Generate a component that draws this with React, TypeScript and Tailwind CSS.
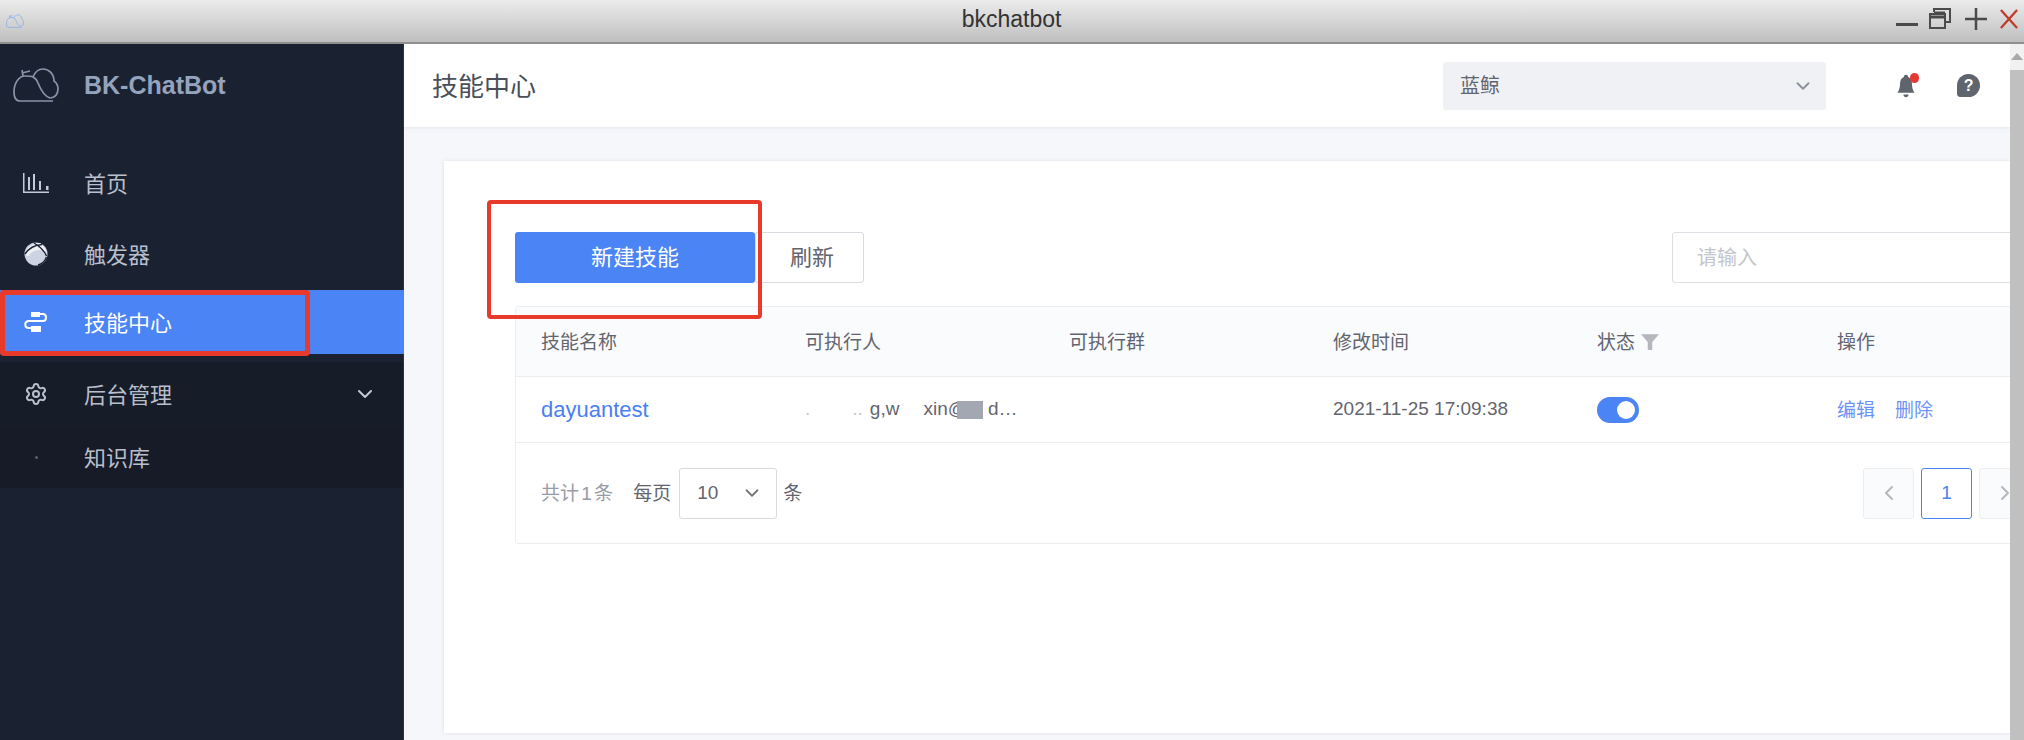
import { ChevronDown, ChevronLeft, ChevronRight, Settings } from "lucide-react";

const FONT = "font-['Liberation_Sans','Noto_Sans_CJK_SC',sans-serif]";

function CloudLogo({ className }: { className: string }) {
  return (
    <svg viewBox="0 0 46 36" fill="none" stroke="currentColor" strokeWidth="1.7" className={className}>
      <path d="M40 33 H7 C2 33 1 28 1 24 C1 15 6 8 12 8 C15 8 18 8 20 9 C22 4 26 1 30 1 C36 1 41 6 41 13 C44 15 45 18 45 21 C45 26 42 30 37 30 C31 28 27 20 25 15 C24 12 22 10 20 9" />
      <path d="M10 8 L9 2 M9 5 L17 3" />
    </svg>
  );
}

function BarsIcon() {
  return (
    <svg viewBox="0 0 26 20" className="w-[26px] h-[20px] text-[#c4cad6]" fill="currentColor">
      <rect x="0" y="0" width="1.5" height="20" />
      <rect x="0" y="18.5" width="26" height="1.5" />
      <rect x="5" y="4" width="2" height="13" />
      <rect x="10" y="1" width="2" height="16" />
      <rect x="16" y="8" width="2" height="9" />
      <rect x="23" y="13" width="2.5" height="4" />
    </svg>
  );
}

function TriggerIcon() {
  return (
    <svg viewBox="0 0 24 24" className="w-[24px] h-[24px]" fill="none">
      <circle cx="12" cy="12" r="11.5" fill="#cdd3e2" />
      <path d="M1 11 C4 4 10 1 16 1 C19 3 21 6 23 10 C18 7 10 7 6 12 C5 15 3 15 1 11 Z" fill="#f0f1f4" />
      <path d="M1 12 C5 6 11 3 18 2.5 M10 1 C15 4 20 8 22.5 14 M22.5 15 C21 19 18 22 14 23" stroke="#1a2232" strokeWidth="1.4" />
    </svg>
  );
}

function SkillIcon() {
  return (
    <svg viewBox="0 0 24 20" className="w-[24px] h-[20px] text-white" fill="none" stroke="currentColor">
      <rect x="7" y="0" width="9" height="5" fill="currentColor" stroke="none" />
      <rect x="7" y="14" width="10" height="6" fill="currentColor" stroke="none" />
      <path strokeWidth="2" d="M16 2 H19 C23 2 23 9 19 9 H5 C0 9 0 16 5 16 H8" />
    </svg>
  );
}

function BellIcon() {
  return (
    <div className="relative w-[20px] h-[24px]">
      <svg viewBox="0 0 22 28" className="w-[20px] h-[24px] text-[#5f646d]" fill="currentColor">
        <path d="M11 1 C13 1 13.5 2.5 13.5 3.5 C17 5 18 8 18 12 C18 16 19 19 21 22 H1 C3 19 4 16 4 12 C4 8 5 5 8.5 3.5 C8.5 2.5 9 1 11 1 Z" />
        <path d="M8 24 H14 C14 26 12.5 27 11 27 C9.5 27 8 26 8 24 Z" />
      </svg>
      <div className="absolute top-[-1px] right-[-3px] w-[9px] h-[10px] rounded-full bg-[#e53935]" />
    </div>
  );
}

function NavRow({ icon, label, active, chevron, className }: { icon: React.ReactNode; label: string; active?: boolean; chevron?: boolean; className: string }) {
  return (
    <div className={`flex items-center ${active ? "bg-[#4a84f5] text-white mr-[-1px]" : "text-[#b9bfcc]"} ${className}`}>
      <div className="w-[72px] flex justify-center shrink-0">{icon}</div>
      <span className="ml-[12px] pt-[3px] text-[22px] leading-none">{label}</span>
      {chevron && <ChevronDown className="ml-auto mr-[26px] w-[24px] h-[24px] text-[#c4cad6]" strokeWidth={2} />}
    </div>
  );
}

const columns = ["技能名称", "可执行人", "可执行群", "修改时间"];

export default function App() {
  return (
    <div className={`${FONT} h-[740px] w-[2024px] overflow-hidden flex flex-col bg-white`}>
      {/* window title bar */}
      <div className="h-[44px] shrink-0 flex items-center border-b-2 border-[#8f8f8f] bg-gradient-to-b from-[#ececec] to-[#bfbfbf] relative">
        <div className="ml-[3px] w-[24px] h-[28px] flex items-center justify-center">
          <CloudLogo className="w-[18px] h-[15px] text-[#7aa7f2]" />
        </div>
        <span className="flex-1 text-center text-[23px] text-[#333] pr-[28px] pb-[4px]">bkchatbot</span>
        <div className="absolute right-[6px] top-[8px] flex items-center">
          <div className="w-[22px] h-[3px] bg-[#4a4a4a] mt-[11px] mr-[11px]" />
          <svg viewBox="0 0 22 22" className="w-[22px] h-[22px] mr-[14px] text-[#4a4a4a]" fill="none" stroke="currentColor" strokeWidth="2">
            <path d="M5 4 V1 H21 V14 H17" />
            <path d="M5 5 H16" strokeWidth="3" />
            <rect x="1" y="6" width="15" height="14" />
            <path d="M1 9 H16" strokeWidth="3" />
          </svg>
          <svg viewBox="0 0 22 22" className="w-[22px] h-[22px] mr-[13px] text-[#4a4a4a]" fill="none" stroke="currentColor" strokeWidth="2.5">
            <path d="M11 0 V22 M0 11 H22" />
          </svg>
          <svg viewBox="0 0 20 22" className="w-[18px] h-[22px] text-[#c0392b]" fill="none" stroke="currentColor" strokeWidth="2.5">
            <path d="M1 1 L19 21 M19 1 L1 21" />
          </svg>
        </div>
      </div>

      <div className="flex-1 flex min-h-0">
        {/* sidebar */}
        <aside className="w-[404px] shrink-0 bg-[#1a2232] flex flex-col border-r border-[#2a3244]">
          <div className="h-[83px] flex items-center shrink-0">
            <div className="w-[72px] flex justify-center">
              <CloudLogo className="w-[46px] h-[36px] text-[#8a94a8]" />
            </div>
            <span className="ml-[12px] pt-[1px] text-[25px] font-bold text-[#95a3bd]">BK-ChatBot</span>
          </div>
          <NavRow icon={<BarsIcon />} label="首页" className="mt-[24px] h-[64px]" />
          <NavRow icon={<TriggerIcon />} label="触发器" className="mt-[7px] h-[64px]" />
          <NavRow icon={<SkillIcon />} label="技能中心" active className="mt-[4px] h-[64px]" />
          <NavRow icon={<Settings className="w-[24px] h-[24px]" />} label="后台管理" chevron className="mt-[8px] h-[64px] bg-[#171c29]" />
          <div className="h-[62px] flex items-center bg-[#161b27] text-[#b9bfcc]">
            <div className="w-[72px] flex justify-center shrink-0">
              <div className="w-[3px] h-[3px] rounded-full bg-[#5a6070]" />
            </div>
            <span className="ml-[12px] pt-[3px] text-[22px] leading-none">知识库</span>
          </div>
        </aside>

        {/* main */}
        <main className="flex-1 min-w-0 flex flex-col bg-[#f5f7fa] overflow-hidden">
          <header className="h-[83px] shrink-0 bg-white flex items-center shadow-[0_1px_3px_rgba(200,205,220,0.4)]">
            <h1 className="ml-[28px] pt-[3px] text-[26px] text-[#4a4f5a]">技能中心</h1>
            <div className="ml-[907px] w-[383px] h-[48px] rounded-[3px] bg-[#f0f1f5] flex items-center pl-[17px] pr-[12px] text-[20px] text-[#63656e]">
              <span>蓝鲸</span>
              <ChevronDown className="ml-auto w-[22px] h-[22px] text-[#8a8f99]" />
            </div>
            <div className="ml-[70px]"><BellIcon /></div>
            <div className="ml-[41px] w-[23px] h-[23px] rounded-[50%_50%_50%_15%] bg-[#5f646d] text-white text-[16px] font-bold flex items-center justify-center">?</div>
          </header>

          <section className="mt-[34px] ml-[40px] h-[572px] bg-white shadow-[0_0_3px_rgba(200,205,220,0.5)] pl-[71px] pt-[71px] overflow-hidden relative">
            <div className="flex items-center">
              <button className="w-[240px] shrink-0 h-[51px] rounded-[3px] bg-[#4a84f5] text-white text-[22px]">新建技能</button>
              <button className="w-[109px] shrink-0 h-[51px] pl-[5px] rounded-[3px] border border-[#d8dae0] bg-white text-[#63656e] text-[22px]">刷新</button>
              <div className="ml-[808px] w-[400px] h-[51px] shrink-0 rounded-[3px] border border-[#dcdee5] flex items-center pl-[24px] text-[20px] text-[#c4c6cc]">请输入</div>
            </div>

            <div className="mt-[23px] w-[1600px] border border-[#eceef2] rounded-[3px]">
              <div className="h-[70px] bg-[#fafbfd] border-b border-[#eceef2] flex items-center text-[19px] text-[#63656e]">
                {columns.map((col) => (
                  <div key={col} className="w-[264px] pl-[25px] pt-[3px] shrink-0">{col}</div>
                ))}
                <div className="w-[240px] pl-[25px] shrink-0 flex items-center pt-[3px]">
                  状态
                  <svg viewBox="0 0 16 16" className="ml-[6px] mb-[2px] w-[18px] h-[18px] text-[#b5b7bd]" fill="currentColor">
                    <path d="M0 1 H16 L10 8 V15 H6 V8 Z" />
                  </svg>
                </div>
                <div className="pl-[25px] pt-[3px]">操作</div>
              </div>
              <div className="h-[66px] border-b border-[#eceef2] flex items-center text-[19px] text-[#63656e]">
                <div className="w-[264px] pl-[25px] shrink-0 text-[22px] text-[#4a7ff5]">dayuantest</div>
                <div className="w-[264px] pl-[25px] shrink-0 flex items-center text-[19px] whitespace-nowrap">
                  <span className="text-[#c5c7cc]">.</span>
                  <span className="ml-[42px] text-[#c5c7cc]">..</span>
                  <span className="ml-[7px]">g,w</span>
                  <span className="ml-[24px]">xin@</span>
                  <span className="ml-[-10px] w-[26px] h-[18px] bg-[#a3a7b2]" />
                  <span className="ml-[5px]">d…</span>
                </div>
                <div className="w-[264px] shrink-0" />
                <div className="w-[264px] pl-[25px] shrink-0">2021-11-25 17:09:38</div>
                <div className="w-[240px] pl-[25px] shrink-0">
                  <div className="w-[42px] h-[26px] rounded-full bg-[#4a84f5] flex items-center justify-end pr-[4px]">
                    <div className="w-[18px] h-[18px] rounded-full bg-white" />
                  </div>
                </div>
                <div className="pl-[25px] pt-[3px] flex gap-[20px] text-[#6b93f7] text-[19px]">
                  <span>编辑</span>
                  <span>删除</span>
                </div>
              </div>
              <div className="h-[100px] flex items-center pl-[25px] text-[19px] text-[#979ba5]">
                <span className="[word-spacing:-3px] pt-[3px]">共计 1 条</span>
                <span className="ml-[20px] pt-[3px] text-[#63656e]">每页</span>
                <div className="ml-[8px] w-[98px] h-[51px] rounded-[3px] border border-[#d8dae0] flex items-center pl-[17px] pr-[13px] text-[#63656e]">
                  10
                  <ChevronDown className="ml-auto w-[22px] h-[22px] text-[#777]" />
                </div>
                <span className="ml-[6px] pt-[3px] text-[#63656e]">条</span>
                <div className="ml-[1061px] flex gap-[7px] shrink-0">
                  <div className="w-[51px] h-[51px] rounded-[3px] border border-[#eceef2] bg-[#fafbfd] flex items-center justify-center text-[#b5b7bd]">
                    <ChevronLeft className="w-[24px] h-[24px]" />
                  </div>
                  <div className="w-[51px] h-[51px] rounded-[3px] border border-[#4a84f5] flex items-center justify-center text-[#4a84f5]">1</div>
                  <div className="w-[51px] h-[51px] rounded-[3px] border border-[#eceef2] bg-[#fafbfd] flex items-center justify-center text-[#b5b7bd]">
                    <ChevronRight className="w-[24px] h-[24px]" />
                  </div>
                </div>
              </div>
            </div>

            {/* red annotation box */}
            <div className="absolute left-[43px] top-[39px] w-[275px] h-[119px] border-[4px] border-[#e8392b] rounded-[4px]" />
          </section>
        </main>

        {/* scrollbar */}
        <div className="w-[14px] shrink-0 flex flex-col bg-[#c0c0c0]">
          <div className="h-[26px] bg-[#f1f1f1] flex justify-center pt-[9px]">
            <div className="w-0 h-0 border-x-[6px] border-x-transparent border-b-[7px] border-b-[#a8a8a8]" />
          </div>
        </div>
      </div>

      {/* red annotation on the sidebar item */}
      <div className="absolute left-0 top-[290px] w-[310px] h-[66px] border-[5px] border-[#e8392b] rounded-[4px]" />
    </div>
  );
}
